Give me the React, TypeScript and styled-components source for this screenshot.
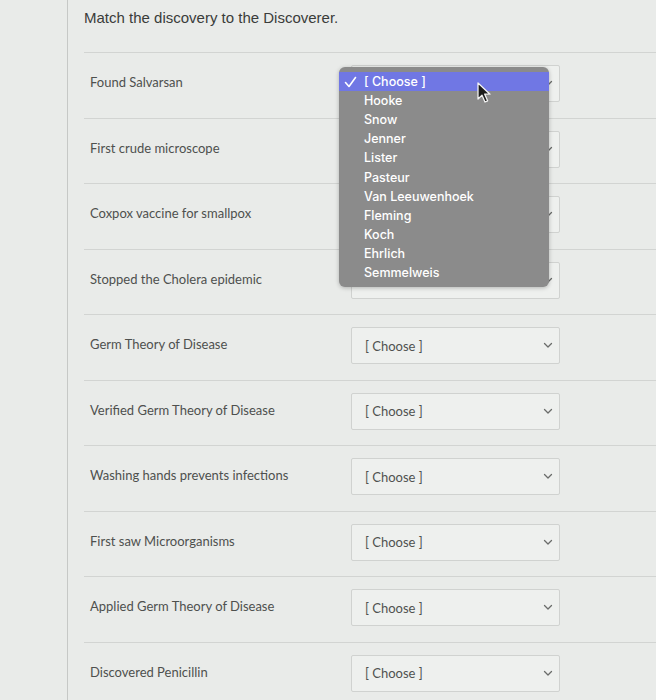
import styled, { createGlobalStyle } from "styled-components";

const GlobalStyle = createGlobalStyle`
  body {
    margin: 0;
    background: #e9ebe9;
  }
`;

const prompts = [
  "Found Salvarsan",
  "First crude microscope",
  "Coxpox vaccine for smallpox",
  "Stopped the Cholera epidemic",
  "Germ Theory of Disease",
  "Verified Germ Theory of Disease",
  "Washing hands prevents infections",
  "First saw Microorganisms",
  "Applied Germ Theory of Disease",
  "Discovered Penicillin",
];

const options = [
  "[ Choose ]",
  "Hooke",
  "Snow",
  "Jenner",
  "Lister",
  "Pasteur",
  "Van Leeuwenhoek",
  "Fleming",
  "Koch",
  "Ehrlich",
  "Semmelweis",
];

// the open menu sits over the first four selects
const COVERED = 4;

function Chevron() {
  return (
    <svg width="10" height="7" viewBox="0 0 10 7" fill="none">
      <path d="M1.5 1.5 L5 5 L8.5 1.5" stroke="#6a6c6a" strokeWidth="1.3" strokeLinecap="round" strokeLinejoin="round" />
    </svg>
  );
}

function Tick() {
  return (
    <svg width="13" height="12" viewBox="0 0 13 12" fill="none">
      <path d="M1.5 6.5 L5 10.5 L11.5 1.5" stroke="#ffffff" strokeWidth="1.6" strokeLinecap="round" strokeLinejoin="round" />
    </svg>
  );
}

function Cursor() {
  return (
    <svg width="15" height="22" viewBox="0 0 15 22">
      <path
        d="M1 1 L1 17 L5 13.2 L8 20 L10.6 18.8 L7.7 12.2 L13 12.2 Z"
        fill="#1c1c1c"
        stroke="#f2f2f2"
        strokeWidth="1.3"
        strokeLinejoin="round"
      />
    </svg>
  );
}

export default function App() {
  return (
    <>
      <GlobalStyle />
      <Page>
        <Gutter />
        <Content>
          <Title>Match the discovery to the Discoverer.</Title>
          {prompts.map((p, i) => (
            <Row key={p}>
              <Label>{p}</Label>
              <Select>
                <SelectText $hidden={i < COVERED}>[ Choose ]</SelectText>
                <Chevron />
              </Select>
            </Row>
          ))}
        </Content>
        <Menu>
          {options.map((o, i) => (
            <MenuItem key={o} $active={i === 0}>
              <Check>{i === 0 && <Tick />}</Check>
              {o}
            </MenuItem>
          ))}
        </Menu>
        <CursorSpot>
          <Cursor />
        </CursorSpot>
      </Page>
    </>
  );
}

const Page = styled.div`
  position: relative;
  display: flex;
  width: 656px;
  height: 700px;
  overflow: hidden;
`;

const Gutter = styled.div`
  width: 67px;
  flex-shrink: 0;
  border-right: 1px solid #c6c8c6;
`;

const Content = styled.div`
  flex: 1;
  padding-left: 16px;
`;

const Title = styled.h1`
  margin: 0;
  height: 52px;
  box-sizing: border-box;
  padding-top: 9px;
  font-family: "Liberation Sans", Arial, sans-serif;
  font-size: 15px;
  font-weight: normal;
  line-height: 18px;
  color: #3a3c3a;
`;

const Row = styled.div`
  display: grid;
  grid-template-columns: 267px 209px;
  align-items: start;
  height: 65.5px;
  box-sizing: border-box;
  border-top: 1px solid #d2d4d2;
`;

const Label = styled.div`
  padding: 21px 0 0 6px;
  font-family: Lato, "Open Sans", sans-serif;
  font-size: 13px;
  line-height: 16px;
  color: #4e504e;
`;

const Select = styled.div`
  margin-top: 12px;
  height: 37px;
  box-sizing: border-box;
  display: flex;
  align-items: center;
  justify-content: space-between;
  padding: 0 6px 0 13px;
  border: 1px solid #d0d2d0;
  border-radius: 2px;
  background: #eef0ee;
  font-family: Lato, "Open Sans", sans-serif;
  font-size: 13px;
  color: #505250;
`;

const SelectText = styled.span<{ $hidden: boolean }>`
  visibility: ${(p) => (p.$hidden ? "hidden" : "visible")};
`;

const Menu = styled.div`
  position: absolute;
  left: 339px;
  top: 67px;
  width: 210px;
  padding: 5px 0 5px;
  border-radius: 6px;
  background: #8b8b8b;
  box-shadow: 0 1px 4px rgba(0, 0, 0, 0.25);
`;

const MenuItem = styled.div<{ $active: boolean }>`
  display: flex;
  align-items: center;
  height: 19.1px;
  padding-left: 5px;
  font-family: Inter, "Noto Sans", sans-serif;
  font-size: 12.5px;
  font-weight: 500;
  color: #ffffff;
  background: ${(p) => (p.$active ? "#7077e4" : "transparent")};
`;

const Check = styled.span`
  display: flex;
  align-items: center;
  width: 20px;
`;

const CursorSpot = styled.div`
  position: absolute;
  left: 477px;
  top: 82px;
`;
